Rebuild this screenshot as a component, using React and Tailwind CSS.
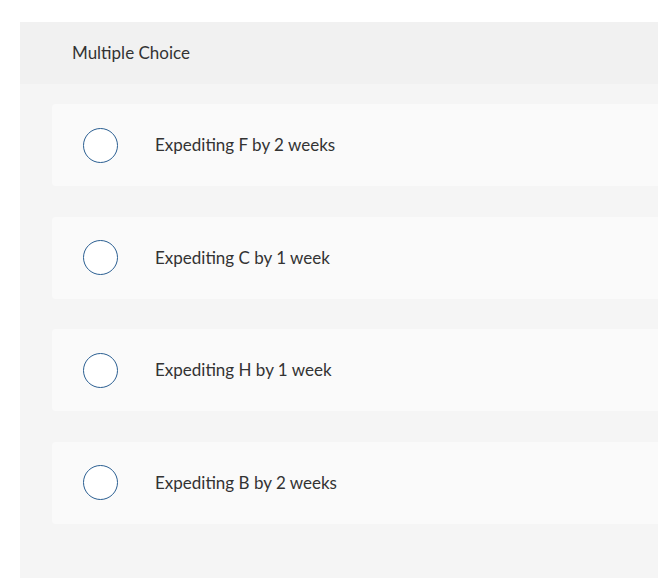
import React from "react";

const options = [
  "Expediting F by 2 weeks",
  "Expediting C by 1 week",
  "Expediting H by 1 week",
  "Expediting B by 2 weeks",
];

export default function App() {
  return (
    <div
      className="w-[658px] h-[578px] overflow-hidden bg-white pt-[22px] pl-[20px]"
      style={{ fontFamily: "Lato, 'Open Sans', sans-serif" }}
    >
      <div className="w-[720px] h-[600px] bg-[#f5f5f5]">
        {/* header */}
        <div className="h-[62px] bg-[#f1f1f1] flex items-center pl-[52px] text-[17px] text-[#333]">
          Multiple Choice
        </div>

        {/* options */}
        <div className="pt-[20px] pl-[32px] flex flex-col gap-[30.5px]">
          {options.map((label) => (
            <div
              key={label}
              className="h-[82px] bg-[#fafafa] rounded-[4px] flex items-center pl-[31px]"
            >
              <span className="w-[35px] h-[35px] rounded-full border-[1.5px] border-[#2b5f92] bg-white shrink-0" />
              <span className="ml-[37px] text-[17px] text-[#333]">{label}</span>
            </div>
          ))}
        </div>
      </div>
    </div>
  );
}
